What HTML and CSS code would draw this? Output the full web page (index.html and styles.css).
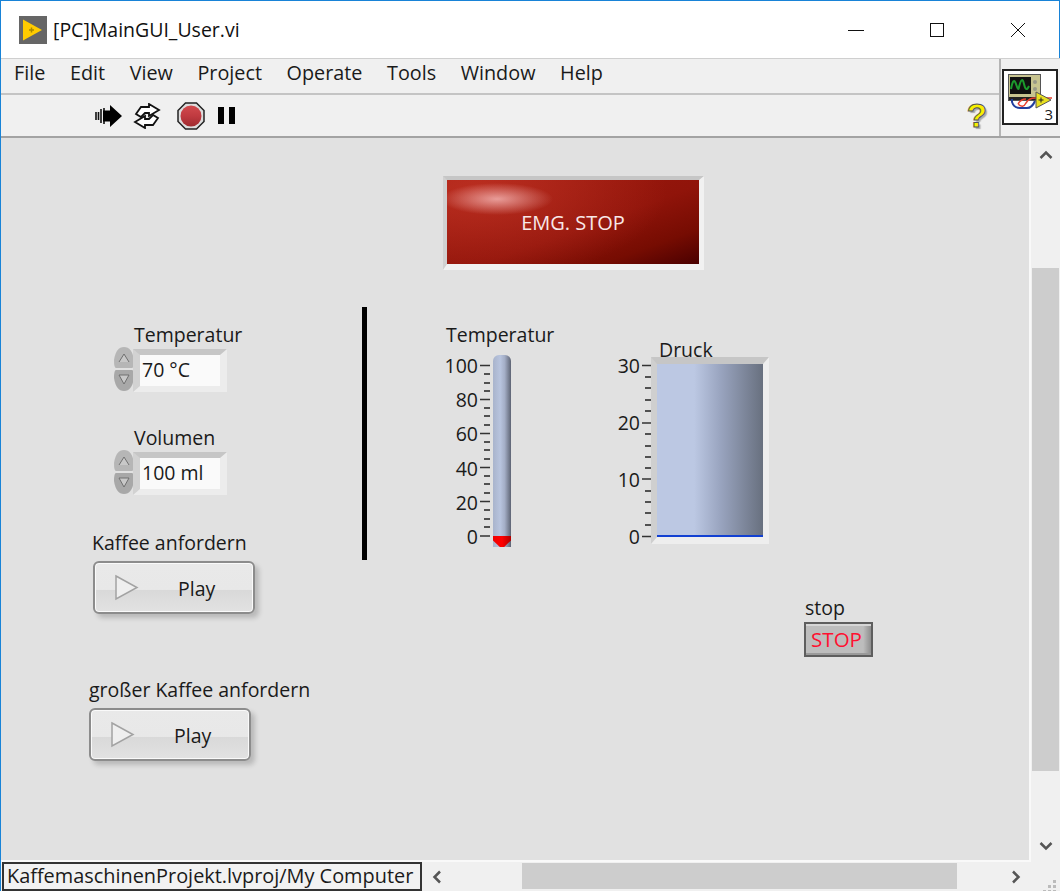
FILE: index.html
```html
<!DOCTYPE html>
<html lang="en">
<head>
  <meta charset="UTF-8">
  <title>[PC]MainGUI_User.vi</title>
  <link rel="stylesheet" href="styles.css">
</head>
<body>
  <div class="window">
    <div class="titlebar">
      <svg class="app-icon" width="28" height="28" viewBox="0 0 28 28">
        <rect width="28" height="28" fill="#666"/>
        <path d="M4 3.5 L23 14 L4 24.5 Z" fill="#fc0"/>
        <path d="M10 14 h5 M12.5 11.5 v5" stroke="#a80" stroke-width="1.5"/>
      </svg>
      <span class="title-text">[PC]MainGUI_User.vi</span>
      <div class="win-controls">
        <svg width="16" height="16" viewBox="0 0 16 16"><path d="M0 8.5 H16" stroke="#111"/></svg>
        <svg width="16" height="16" viewBox="0 0 16 16"><rect x="1.5" y="1.5" width="13" height="13" fill="none" stroke="#111"/></svg>
        <svg width="16" height="16" viewBox="0 0 16 16"><path d="M1 1 L15 15 M15 1 L1 15" stroke="#111"/></svg>
      </div>
    </div>

    <div class="header">
      <div class="header-main">
        <div class="menubar">
          <span>File</span>
          <span>Edit</span>
          <span>View</span>
          <span>Project</span>
          <span>Operate</span>
          <span>Tools</span>
          <span>Window</span>
          <span>Help</span>
        </div>
        <div class="toolbar">
          <svg class="tool-run" width="28" height="24" viewBox="0 0 28 24">
            <path d="M1 8 v8 M3.500 8 v8 M6 5 v14 M9 4 v16" stroke="#111" stroke-width="1.600"/>
            <path d="M8 6.500 h7 v-5.500 L27 12 L15 23 v-5.500 h-7 Z" fill="#000"/>
          </svg>
          <svg class="tool-loop" width="28" height="26" viewBox="0 0 28 26">
            <path d="M3 11 L8 4 H16 V1 L26 7 L16 13 V10 H12 L8 14 Z" fill="#fff" stroke="#111" stroke-width="1.800"/>
            <path d="M25 15 L20 22 H12 V25 L2 19 L12 13 V16 H16 L20 12 Z" fill="#fff" stroke="#111" stroke-width="1.800"/>
          </svg>
          <svg class="tool-stop" width="28" height="28" viewBox="0 0 28 28">
            <defs>
              <linearGradient id="stopRed" x1="0" y1="0" x2="0" y2="1">
                <stop offset="0" stop-color="#d24a4e"/>
                <stop offset="0.5" stop-color="#c03a40"/>
                <stop offset="1" stop-color="#a02c30"/>
              </linearGradient>
            </defs>
            <path d="M8.500 1 H19.500 L27 8.500 V19.500 L19.500 27 H8.500 L1 19.500 V8.500 Z" fill="#ddd" stroke="#222" stroke-width="1.500"/>
            <circle cx="14" cy="14" r="10.500" fill="url(#stopRed)"/>
          </svg>
          <div class="tool-pause"><i></i><i></i></div>
          <span class="help-icon">?</span>
        </div>
      </div>
      <div class="vi-pane">
        <div class="vi-icon">
          <svg width="52" height="52" viewBox="0 0 52 52">
            <rect x="4.500" y="3.500" width="32" height="26" fill="#c8c490" stroke="#555"/>
            <rect x="6" y="6" width="21" height="17" fill="#111"/>
            <rect x="5" y="26" width="31" height="3" fill="#222"/>
            <path d="M7 18 q2.500 -13 5 -5 t3 3 q3 -12 5 -3 t5 2" fill="none" stroke="#1c9a2c" stroke-width="2"/>
            <circle cx="31" cy="11" r="2" fill="#998"/>
            <circle cx="31" cy="18" r="2" fill="#998"/>
            <path d="M8 28 v3 q2 6 8 6 h7 q5 0 8 -7" fill="none" stroke="#223f9e" stroke-width="2"/>
            <path d="M14 33 q3 -5 8 -5 M14 33 q5 5 8 -1 q3 -5 9 -5 h17" fill="none" stroke="#e84030" stroke-width="1.500"/>
            <path d="M32 21 L47 29 L32 37 Z" fill="#e8e020" stroke="#555"/>
            <path d="M34.500 29 h5 M37 26.500 v5" stroke="#222"/>
          </svg>
          <span class="vi-num">3</span>
        </div>
      </div>
    </div>

    <div class="middle">
      <div class="panel">
        <div class="emg-frame"><div class="emg-btn">EMG. STOP</div></div>

        <span class="lbl lbl-temp">Temperatur</span>
        <svg class="spin spin-temp" width="22" height="46" viewBox="0 0 22 46">
          <path d="M3 22 Q1 22 1 14 Q3 1 11 1 Q19 1 21 14 Q21 22 19 22 Z" fill="#b6b6b6"/>
          <path d="M3 24 Q1 24 1 32 Q3 45 11 45 Q19 45 21 32 Q21 24 19 24 Z" fill="#a8a8a8"/>
          <path d="M6 16 L11 8 L16 16 M6 29 H16 L11 38 Z" fill="#c8c8c8" stroke="#707070"/>
        </svg>
        <div class="num num-temp"><div class="num-inner">70 °C</div></div>

        <span class="lbl lbl-vol">Volumen</span>
        <svg class="spin spin-vol" width="22" height="46" viewBox="0 0 22 46">
          <path d="M3 22 Q1 22 1 14 Q3 1 11 1 Q19 1 21 14 Q21 22 19 22 Z" fill="#b6b6b6"/>
          <path d="M3 24 Q1 24 1 32 Q3 45 11 45 Q19 45 21 32 Q21 24 19 24 Z" fill="#a8a8a8"/>
          <path d="M6 16 L11 8 L16 16 M6 29 H16 L11 38 Z" fill="#c8c8c8" stroke="#707070"/>
        </svg>
        <div class="num num-vol"><div class="num-inner">100 ml</div></div>

        <span class="lbl lbl-kaffee">Kaffee anfordern</span>
        <div class="play play-a">
          <svg width="25" height="27" viewBox="0 0 25 27"><path d="M2 2 L23 13.500 L2 25 Z" fill="#efefef" stroke="#a2a2a2" stroke-width="1.500"/></svg>
          <span>Play</span>
        </div>

        <span class="lbl lbl-gross">großer Kaffee anfordern</span>
        <div class="play play-b">
          <svg width="25" height="27" viewBox="0 0 25 27"><path d="M2 2 L23 13.500 L2 25 Z" fill="#efefef" stroke="#a2a2a2" stroke-width="1.500"/></svg>
          <span>Play</span>
        </div>

        <div class="divider"></div>

        <span class="lbl lbl-temp2">Temperatur</span>
        <div class="scale scale-temp">
          <span>100</span><span>80</span><span>60</span><span>40</span><span>20</span><span>0</span>
        </div>
        <svg class="ticks ticks-temp" width="12" height="176" viewBox="0 0 12 176">
          <path d="M0 2.500 H10 M0 36.500 H10 M0 70.500 H10 M0 104.500 H10 M0 138.500 H10 M0 173 H10" stroke="#333" stroke-width="1.500"/>
          <path d="M4 11 H10 M4 20 H10 M4 28 H10 M4 45 H10 M4 53 H10 M4 62 H10 M4 79 H10 M4 87 H10 M4 96 H10 M4 113 H10 M4 121 H10 M4 130 H10 M4 147 H10 M4 156 H10 M4 164 H10" stroke="#222" stroke-width="1.500"/>
        </svg>
        <div class="thermo"><div class="thermo-fill"></div></div>

        <span class="lbl lbl-druck">Druck</span>
        <div class="scale scale-druck">
          <span>30</span><span>20</span><span>10</span><span>0</span>
        </div>
        <svg class="ticks ticks-druck" width="10" height="176" viewBox="0 0 10 176">
          <path d="M0 2.500 H9 M0 60 H9 M0 116 H9 M0 173.500 H9" stroke="#333" stroke-width="1.500"/>
          <path d="M3 14 H9 M3 25 H9 M3 37 H9 M3 48 H9 M3 71 H9 M3 83 H9 M3 94 H9 M3 105 H9 M3 128 H9 M3 139 H9 M3 150 H9 M3 162 H9" stroke="#222" stroke-width="1.500"/>
        </svg>
        <div class="tank"><div class="tank-inner"><div class="tank-level"></div></div></div>

        <span class="lbl lbl-stop">stop</span>
        <div class="stop-btn">STOP</div>
      </div>

      <div class="vscroll">
        <svg class="arrow" width="14" height="10" viewBox="0 0 14 10"><path d="M1.500 8 L7 2.500 L12.500 8" fill="none" stroke="#555" stroke-width="2.500"/></svg>
        <div class="vtrack"><div class="vthumb"></div></div>
        <svg class="arrow" width="14" height="10" viewBox="0 0 14 10"><path d="M1.500 2 L7 7.500 L12.500 2" fill="none" stroke="#555" stroke-width="2.500"/></svg>
      </div>
    </div>

    <div class="bottom">
      <div class="status">KaffemaschinenProjekt.lvproj/My Computer</div>
      <div class="hscroll">
        <svg class="arrow-h" width="10" height="14" viewBox="0 0 10 14"><path d="M8 1.500 L2.500 7 L8 12.500" fill="none" stroke="#555" stroke-width="2.500"/></svg>
        <div class="htrack"><div class="hthumb"></div></div>
        <svg class="arrow-h" width="10" height="14" viewBox="0 0 10 14"><path d="M2 1.500 L7.500 7 L2 12.500" fill="none" stroke="#555" stroke-width="2.500"/></svg>
      </div>
      <div class="grip">
        <svg width="16" height="16" viewBox="0 0 16 16"><path d="M11 1 h3 v3 h-3 Z M6 6 h3 v3 h-3 Z M11 6 h3 v3 h-3 Z M1 11 h3 v3 h-3 Z M6 11 h3 v3 h-3 Z M11 11 h3 v3 h-3 Z" fill="#bbb"/></svg>
      </div>
    </div>
  </div>
</body>
</html>
```

FILE: styles.css
```css
* {
  box-sizing: border-box;
}

html, body {
  margin: 0;
  height: 100%;
  overflow: hidden;
}

body {
  font-family: "Open Sans", "Noto Sans", sans-serif;
  font-size: 19.500px;
  color: #1a1a1a;
  background: #f0f0f0;
}

.window {
  width: 1060px;
  height: 891px;
  display: flex;
  flex-direction: column;
  border-left: 1px solid #1883d7;
  border-top: 1px solid #1883d7;
}

.titlebar {
  height: 57px;
  flex: none;
  display: flex;
  align-items: center;
  background: #fff;
  padding-left: 18px;
  border-right: 1px solid #1883d7;
}

.title-text {
  margin-left: 6px;
  color: #111;
}

.win-controls {
  margin-left: auto;
  display: flex;
  gap: 65px;
  padding-right: 33px;
}

.header {
  height: 80px;
  flex: none;
  display: flex;
  background: #f0f0f0;
  border-top: 1px solid #cfcfcf;
  border-bottom: 2px solid #a3a3a3;
}

.header-main {
  flex: 1;
  display: flex;
  flex-direction: column;
  border-right: 2px solid #b4b4b4;
}

.menubar {
  height: 36px;
  flex: none;
  display: flex;
  align-items: center;
  padding: 0 0 7px 13px;
  gap: 24.600px;
  font-size: 19.800px;
  border-bottom: 2px solid #c4c4c4;
}

.toolbar {
  flex: 1;
  display: flex;
  align-items: center;
  padding-left: 94px;
  padding-right: 12px;
}

.tool-loop {
  margin-left: 10px;
}

.tool-stop {
  margin-left: 16px;
}

.tool-pause {
  margin-left: 13px;
  display: flex;
  gap: 5px;
}

.tool-pause i {
  width: 6px;
  height: 17px;
  background: #000;
}

.help-icon {
  margin-left: auto;
  font-family: "Liberation Sans", sans-serif;
  font-weight: bold;
  font-size: 33px;
  line-height: 1;
  color: #f8f000;
  -webkit-text-stroke: 1px #555;
  text-shadow: 2px 2px 1px #aaa;
}

.vi-pane {
  width: 59px;
  flex: none;
  padding: 10px 0 0 1px;
}

.vi-icon {
  position: relative;
  width: 56px;
  height: 56px;
  background: #fff;
  border: 2px solid #222;
}

.vi-num {
  position: absolute;
  right: 3px;
  bottom: -1px;
  font-size: 15px;
  line-height: 20px;
}

.middle {
  flex: 1;
  display: flex;
  min-height: 0;
}

.panel {
  position: relative;
  flex: 1;
  background: #e1e1e1;
  border-right: 2px solid #f9f9f9;
  border-bottom: 2px solid #f9f9f9;
}

.vscroll {
  width: 29px;
  flex: none;
  display: flex;
  flex-direction: column;
  align-items: center;
  background: #f0f0f0;
  padding: 12px 0 11px;
}

.vtrack {
  flex: 1;
  width: 100%;
  padding: 108px 1px 0 1px;
}

.vthumb {
  height: 503px;
  background: #cdcdcd;
}

.bottom {
  height: 29px;
  flex: none;
  display: flex;
  background: #f0f0f0;
}

.status {
  width: 420px;
  height: 29px;
  flex: none;
  margin-left: 1px;
  padding-left: 3px;
  border: 2px solid #333;
  background: #f2f2f2;
  font-size: 19.900px;
  line-height: 24px;
  white-space: nowrap;
  overflow: hidden;
}

.hscroll {
  flex: 1;
  display: flex;
  align-items: center;
  padding: 0 10px;
}

.htrack {
  flex: 1;
  height: 100%;
  padding: 1px 54px 2px 80px;
}

.hthumb {
  height: 100%;
  background: #cdcdcd;
}

.grip {
  width: 29px;
  flex: none;
  padding: 12px 0 0 11px;
}

/* front panel objects sit at free positions, like on the LabVIEW canvas */
.lbl {
  position: absolute;
  line-height: 24px;
  white-space: nowrap;
}

.lbl-temp { left: 133px; top: 185px; }
.lbl-vol { left: 133px; top: 288px; }
.lbl-kaffee { left: 91px; top: 393px; }
.lbl-gross { left: 88px; top: 540px; }
.lbl-temp2 { left: 445px; top: 185px; }
.lbl-druck { left: 658px; top: 200px; z-index: 1; }
.lbl-stop { left: 804px; top: 458px; }

.emg-frame {
  position: absolute;
  left: 442px;
  top: 38px;
  width: 261px;
  height: 94px;
  border-style: solid;
  border-width: 4px 5px 6px 4px;
  border-color: #c6c6c6 #f1f1f1 #f1f1f1 #d0d0d0;
}

.emg-btn {
  height: 100%;
  display: flex;
  align-items: center;
  justify-content: center;
  color: #f8e8e8;
  font-size: 20px;
  background:
    radial-gradient(ellipse 56px 16px at 50px 19px, rgba(255, 205, 205, 0.7), rgba(255, 205, 205, 0) 100%),
    radial-gradient(ellipse 190px 90px at 30px 10px, rgba(205, 60, 45, 0.6), rgba(205, 60, 45, 0) 100%),
    linear-gradient(160deg, #a01a0e 0%, #90140a 55%, #760c02 80%, #4a0000 100%);
}

.spin {
  position: absolute;
}

.spin-temp { left: 112px; top: 208px; }
.spin-vol { left: 112px; top: 311px; }

.num {
  position: absolute;
  left: 132px;
  width: 94px;
  height: 43px;
  border-style: solid;
  border-width: 6px 7px 6px 7px;
  border-color: #c6c6c6 #ececec #ececec #d2d2d2;
}

.num-temp { top: 211px; }
.num-vol { top: 314px; }

.num-inner {
  height: 100%;
  background: #fafafa;
  line-height: 30px;
  padding-left: 2px;
}

.play {
  position: absolute;
  width: 162px;
  height: 53px;
  display: flex;
  align-items: center;
  padding-left: 19px;
  gap: 39px;
  border: 2px solid #8c8c8c;
  border-radius: 6px;
  background: linear-gradient(#e9e9e9 0%, #e8e8e8 54%, #d9d9d9 56%, #e2e2e2 100%);
  box-shadow: inset 0 0 0 1px #fafafa, 4px 4px 5px rgba(0, 0, 0, 0.18);
}

.play span {
  margin-top: 2px;
}

.play-a { left: 92px; top: 423px; }
.play-b { left: 88px; top: 570px; }

.divider {
  position: absolute;
  left: 361px;
  top: 169px;
  width: 5px;
  height: 253px;
  background: #000;
}

.scale {
  position: absolute;
  display: flex;
  flex-direction: column;
  justify-content: space-between;
  align-items: flex-end;
  line-height: 24px;
}

.scale-temp {
  left: 425px;
  top: 216px;
  width: 52px;
  height: 195px;
}

.scale-druck {
  left: 590px;
  top: 216px;
  width: 49px;
  height: 195px;
}

.ticks {
  position: absolute;
}

.ticks-temp { left: 479px; top: 225px; }
.ticks-druck { left: 641px; top: 225px; }

.thermo {
  position: absolute;
  left: 492px;
  top: 217px;
  width: 18px;
  height: 192px;
  border-radius: 6px 6px 0 0;
  background: linear-gradient(90deg, #a9b4cc 0%, #b8c4de 40%, #a4aec6 65%, #5e6474 100%);
}

.thermo-fill {
  position: absolute;
  left: 0;
  right: 0;
  bottom: 0;
  height: 11px;
  background: linear-gradient(90deg, #f00000 0%, #ff0000 50%, #b00000 100%);
  clip-path: polygon(0 0, 100% 0, 100% 40%, 62% 100%, 38% 100%, 0 40%);
}

.tank {
  position: absolute;
  left: 650px;
  top: 219px;
  width: 118px;
  height: 187px;
  border-style: solid;
  border-width: 7px 6px 7px 6px;
  border-color: #c6c6c6 #eeeeee #eeeeee #cfcfcf;
}

.tank-inner {
  position: relative;
  height: 100%;
  background: linear-gradient(90deg, #bcc8e3 0%, #bcc8e3 35%, #99a4bf 60%, #68707f 100%);
}

.tank-level {
  position: absolute;
  left: 0;
  right: 0;
  bottom: 0;
  height: 2px;
  background: #1240d2;
}

.stop-btn {
  position: absolute;
  left: 803px;
  top: 484px;
  width: 69px;
  height: 35px;
  padding-right: 4px;
  border: 2px solid #5e5e5e;
  background: linear-gradient(90deg, #bdbdbd 0%, #bdbdbd 88%, #8e8e8e 100%);
  box-shadow: inset 0 -2px 0 #9a9a9a, inset 0 2px 0 #d6d6d6;
  color: #ff1030;
  font-size: 20.500px;
  line-height: 31px;
  text-align: center;
}
```
